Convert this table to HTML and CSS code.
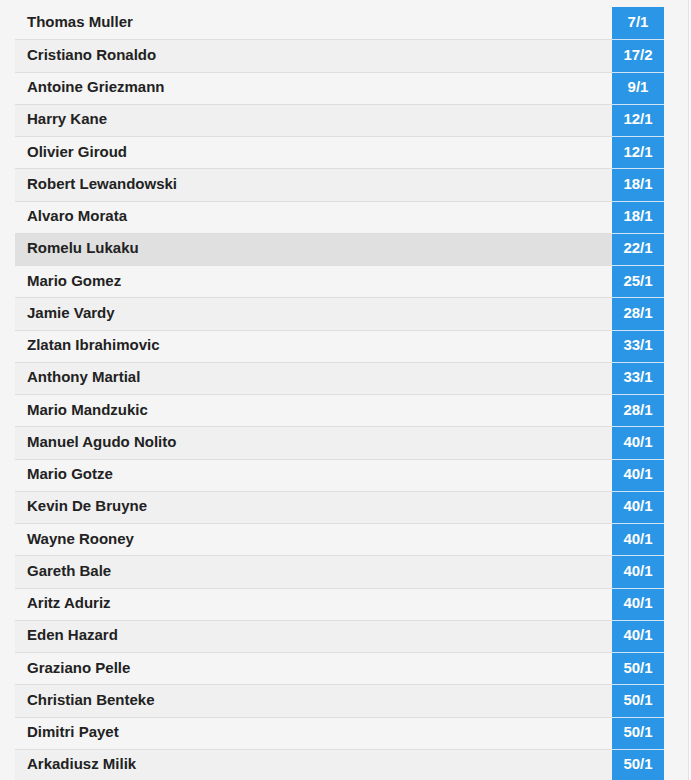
FILE: index.html
```html
<!DOCTYPE html>
<html>
<head>
<meta charset="utf-8">
<link rel="stylesheet" href="styles.css">
</head>
<body>
<div class="page">
  <div class="list">
    <div class="row"><div class="name">Thomas Muller</div><div class="odds">7/1</div></div>
    <div class="row"><div class="name">Cristiano Ronaldo</div><div class="odds">17/2</div></div>
    <div class="row"><div class="name">Antoine Griezmann</div><div class="odds">9/1</div></div>
    <div class="row"><div class="name">Harry Kane</div><div class="odds">12/1</div></div>
    <div class="row"><div class="name">Olivier Giroud</div><div class="odds">12/1</div></div>
    <div class="row"><div class="name">Robert Lewandowski</div><div class="odds">18/1</div></div>
    <div class="row"><div class="name">Alvaro Morata</div><div class="odds">18/1</div></div>
    <div class="row hover"><div class="name">Romelu Lukaku</div><div class="odds">22/1</div></div>
    <div class="row"><div class="name">Mario Gomez</div><div class="odds">25/1</div></div>
    <div class="row"><div class="name">Jamie Vardy</div><div class="odds">28/1</div></div>
    <div class="row"><div class="name">Zlatan Ibrahimovic</div><div class="odds">33/1</div></div>
    <div class="row"><div class="name">Anthony Martial</div><div class="odds">33/1</div></div>
    <div class="row"><div class="name">Mario Mandzukic</div><div class="odds">28/1</div></div>
    <div class="row"><div class="name">Manuel Agudo Nolito</div><div class="odds">40/1</div></div>
    <div class="row"><div class="name">Mario Gotze</div><div class="odds">40/1</div></div>
    <div class="row"><div class="name">Kevin De Bruyne</div><div class="odds">40/1</div></div>
    <div class="row"><div class="name">Wayne Rooney</div><div class="odds">40/1</div></div>
    <div class="row"><div class="name">Gareth Bale</div><div class="odds">40/1</div></div>
    <div class="row"><div class="name">Aritz Aduriz</div><div class="odds">40/1</div></div>
    <div class="row"><div class="name">Eden Hazard</div><div class="odds">40/1</div></div>
    <div class="row"><div class="name">Graziano Pelle</div><div class="odds">50/1</div></div>
    <div class="row"><div class="name">Christian Benteke</div><div class="odds">50/1</div></div>
    <div class="row"><div class="name">Dimitri Payet</div><div class="odds">50/1</div></div>
    <div class="row"><div class="name">Arkadiusz Milik</div><div class="odds">50/1</div></div>
  </div>
</div>
</body>
</html>
```

FILE: styles.css
```css
html, body {
  margin: 0;
  padding: 0;
  background: #fbfbfb;
  height: 100%;
  overflow: hidden;
}
.page {
  width: 689px;
  height: 780px;
  background: #f5f5f5;
  border-right: 1px solid #e3e3e3;
  padding: 7px 0 0 15px;
  box-sizing: border-box;
  font-family: "Liberation Sans", Arial, sans-serif;
  font-size: 15px;
  font-weight: bold;
}
.list {
  width: 649px;
  display: flex;
  flex-direction: column;
}
.row {
  display: grid;
  grid-template-columns: 1fr 52px;
  height: 32.25px;
  box-sizing: border-box;
}
.row + .row .name {
  border-top: 1px solid #dedede;
}
.row + .row .odds {
  border-top: 1px solid #cfe4f6;
}
.row:nth-child(even) .name {
  background: #f0f0f0;
}
.row.hover .name {
  background: #e0e0e0;
}
.name,
.odds {
  display: flex;
  align-items: center;
  padding-bottom: 3px;
  box-sizing: border-box;
}
.name {
  padding-left: 12px;
  color: #222;
  background: #f5f5f5;
}
.odds {
  justify-content: center;
  background: #2b96e6;
  color: #fff;
}
```
